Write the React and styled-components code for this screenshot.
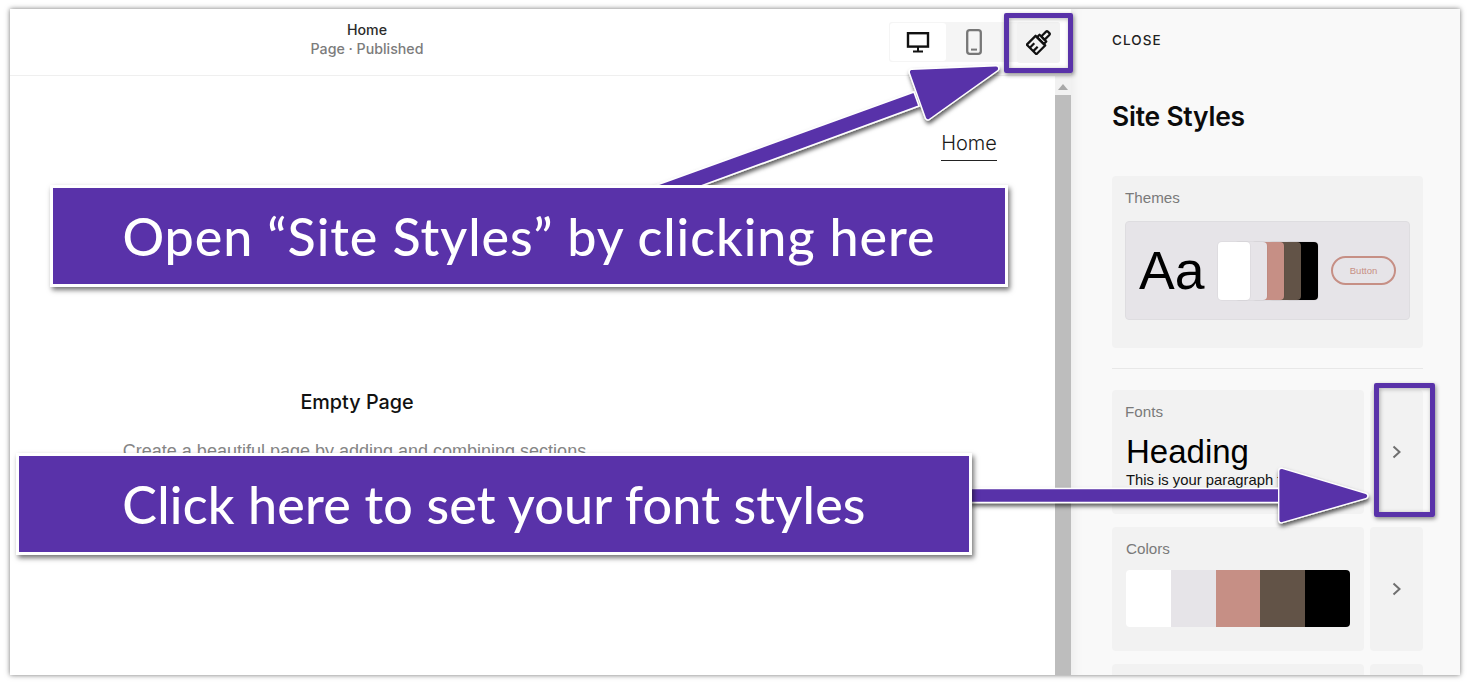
import React from 'react';
import styled, { createGlobalStyle } from 'styled-components';

const GlobalStyle = createGlobalStyle`
  html, body {
    margin: 0;
    padding: 0;
    background: #fff;
    font-family: "Inter", "Liberation Sans", sans-serif;
  }
`

const PURPLE = '#5932a9';

// page and screenshot frame
const Page = styled.div`
  position: relative;
  width: 1470px;
  height: 688px;
  padding: 9px 10px 13px;
  box-sizing: border-box;
  overflow: hidden;
  background: #fff;
`
const Screen = styled.div`
  display: flex;
  height: 666px;
  background: #fff;
  overflow: hidden;
  box-shadow: 0 0 5px rgba(0, 0, 0, 0.55);
`

// left side: editor
const Editor = styled.div`
  display: flex;
  flex-direction: column;
  width: 1061px;
  flex-shrink: 0;
`
const Header = styled.header`
  display: flex;
  align-items: center;
  height: 67px;
  flex-shrink: 0;
  padding-right: 11px;
  box-sizing: border-box;
  border-bottom: 1px solid #efefef;
`
const PageTitle = styled.div`
  width: 714px;
  padding-bottom: 7px;
  text-align: center;
  font-size: 14.2px;
  line-height: 19px;
  font-weight: 500;
  color: #2b2b2b;
`
const PageStatus = styled.div`
  color: #7c7c7c;
`
const DeviceGroup = styled.div`
  display: flex;
  align-items: center;
  margin-left: auto;
  height: 40px;
  padding-left: 1px;
  background: #f5f5f5;
  border-radius: 3px;
`
const DeviceButton = styled.div`
  display: flex;
  align-items: center;
  justify-content: center;
  width: ${p => p.$width}px;
  height: ${p => p.$height}px;
  margin-left: ${p => p.$gap || 0}px;
  background: ${p => p.$bg || 'transparent'};
  border-radius: 3px;
`
const EditorBody = styled.div`
  flex: 1;
  display: flex;
  min-height: 0;
`
const Canvas = styled.div`
  flex: 1;
  display: flex;
  flex-direction: column;
  padding: 55px 58px 0 0;
`
const NavLink = styled.div`
  align-self: flex-end;
  width: 56px;
  padding-bottom: 5px;
  border-bottom: 1px solid #222;
  font-weight: 300;
  font-size: 20px;
  line-height: 24px;
  color: #1a1a1a;
  text-align: center;
`
const EmptyBlock = styled.div`
  width: 694px;
  margin-top: 229px;
  text-align: center;
`
const EmptyTitle = styled.div`
  font-size: 19.8px;
  line-height: 24px;
  font-weight: 500;
  color: #111;
`
const EmptyText = styled.div`
  margin-top: 26px;
  font-family: "Liberation Sans", sans-serif;
  font-size: 18px;
  line-height: 22px;
  color: #858585;
`
const Scrollbar = styled.div`
  display: flex;
  flex-direction: column;
  align-items: center;
  width: 16px;
  flex-shrink: 0;
  background: #f1f1f1;
`
const ScrollUp = styled.div`
  width: 0;
  height: 0;
  margin: 8px 0 5px;
  border-left: 5px solid transparent;
  border-right: 5px solid transparent;
  border-bottom: 6px solid #a8a8a8;
`
const ScrollThumb = styled.div`
  flex: 1;
  width: 100%;
  background: #bdbdbd;
`

// right side: site styles panel
const Panel = styled.aside`
  flex: 1;
  padding: 24px 37px 0 41px;
  background: #f9f9f9;
  box-shadow: inset 14px 0 14px -14px rgba(0, 0, 0, 0.08);
  overflow: hidden;
`
const CloseLink = styled.div`
  font-size: 13.5px;
  line-height: 14px;
  font-weight: 500;
  letter-spacing: 1.1px;
  color: #222;
`
const PanelTitle = styled.h1`
  margin: 53px 0 0;
  font-size: 26.4px;
  line-height: 32px;
  font-weight: 600;
  letter-spacing: -0.2px;
  color: #0c0c0c;
`
const Card = styled.div`
  flex: 1;
  height: ${p => p.$height}px;
  padding: ${p => p.$pad || '14px 13px 0'};
  box-sizing: border-box;
  background: #f2f2f2;
  border-radius: 4px;
  overflow: hidden;
`
const ThemeWrap = styled.div`
  display: flex;
  margin-top: 44px;
`
const CardLabel = styled.div`
  font-family: "Liberation Sans", sans-serif;
  font-size: 15.2px;
  line-height: 16px;
  color: #7a7a7a;
`
const ThemePreview = styled.div`
  display: flex;
  align-items: center;
  height: 99px;
  margin-top: 15px;
  padding-left: 13px;
  box-sizing: border-box;
  background: #e6e4e8;
  border: 1px solid #dedde0;
  border-radius: 4px;
`
const ThemeAa = styled.div`
  width: 79px;
  font-family: "Liberation Sans", sans-serif;
  font-size: 53.5px;
  line-height: 60px;
  color: #000;
`
const StackedSwatches = styled.div`
  display: flex;
  width: 100px;
  height: 58px;
`
const StackedSwatch = styled.div`
  position: relative;
  z-index: ${p => p.$z};
  width: 32px;
  margin-left: ${p => p.$first ? 0 : -15}px;
  background: ${p => p.$color};
  border-radius: 4px;
  box-shadow: 0 0 0 1px rgba(0, 0, 0, 0.03);
`
const ThemeButton = styled.div`
  display: flex;
  align-items: center;
  justify-content: center;
  width: 65px;
  height: 29px;
  margin-left: 13px;
  box-sizing: border-box;
  border: 2px solid #c68f85;
  border-radius: 15px;
  font-family: "Liberation Sans", sans-serif;
  font-size: 9.5px;
  color: #c68f85;
`
const Divider = styled.div`
  height: 1px;
  margin: 20px 0 21px;
  background: #e8e8e8;
`
const Row = styled.div`
  display: flex;
  gap: 6px;
  margin-bottom: 13px;
`
const ChevronCard = styled.div`
  display: flex;
  align-items: center;
  justify-content: center;
  width: 53px;
  height: ${p => p.$height}px;
  flex-shrink: 0;
  background: #f2f2f2;
  border-radius: 4px;
  color: #6f6f6f;
`
const FontHeading = styled.div`
  margin-top: 14px;
  margin-left: 1px;
  font-family: "Liberation Sans", sans-serif;
  font-size: 33px;
  line-height: 36px;
  color: #000;
`
const FontParagraph = styled.div`
  margin-top: 2px;
  margin-left: 1px;
  font-family: "Liberation Sans", sans-serif;
  font-size: 14.8px;
  line-height: 16px;
  white-space: nowrap;
  color: #111;
`
const ColorStrip = styled.div`
  display: flex;
  height: 57px;
  margin-top: 13px;
  border-radius: 4px;
  overflow: hidden;
`
const ColorCell = styled.div`
  flex: 1;
  background: ${p => p.$color};
`

// tutorial annotations on top of the screenshot
const ArrowLayer = styled.svg`
  position: absolute;
  left: 0;
  top: 0;
  pointer-events: none;
`
const Banner = styled.div`
  position: absolute;
  left: ${p => p.$left}px;
  top: ${p => p.$top}px;
  width: ${p => p.$width}px;
  height: 102px;
  display: flex;
  align-items: center;
  justify-content: center;
  box-sizing: border-box;
  background: ${PURPLE};
  border: 3px solid #fff;
  box-shadow: 2px 3px 5px rgba(0, 0, 0, 0.55);
  font-family: "Lato", sans-serif;
  font-size: 52px;
  font-weight: 500;
  color: #fff;
  letter-spacing: ${p => p.$spacing}px;
  white-space: nowrap;
`
const Highlight = styled.div`
  position: absolute;
  left: ${p => p.$left}px;
  top: ${p => p.$top}px;
  width: ${p => p.$width}px;
  height: ${p => p.$height}px;
  box-sizing: border-box;
  border: 5px solid ${PURPLE};
  border-radius: 2px;
  box-shadow: 1px 2px 4px rgba(0, 0, 0, 0.45), inset 1px 1px 4px rgba(0, 0, 0, 0.3);
`

const DesktopIcon = () => (
  <svg width="24" height="24" viewBox="0 0 24 24" fill="none" stroke="#111" strokeWidth="2.4">
    <rect x="2" y="3.2" width="20" height="13.4" />
    <path d="M12 17v4M7 21.6h10" strokeWidth="2" />
  </svg>
)

const PhoneIcon = () => (
  <svg width="18" height="26" viewBox="0 0 18 26" fill="none" stroke="#777">
    <rect x="2.2" y="1.2" width="13.6" height="23.6" rx="2.6" strokeWidth="2.3" />
    <path d="M6 20.6h6" strokeWidth="2" />
  </svg>
)

const BrushIcon = () => (
  <svg width="25" height="25" viewBox="0 0 28 28" fill="none" stroke="#111" strokeWidth="2.5" strokeLinejoin="round">
    <g transform="rotate(45 14 14)">
      <rect x="11.4" y="-2" width="5.2" height="9" rx="1.4" />
      <path d="M8.6 7h10.8v4H8.6z" />
      <path d="M6.4 11h15.2v14H6.4z" />
      <path d="M11.3 25v-7M16.7 25v-7" />
    </g>
  </svg>
)

const Chevron = () => (
  <svg width="12" height="16" viewBox="0 0 12 16" fill="none" stroke="currentColor" strokeWidth="2">
    <path d="M2.5 2.5 8.5 8l-6 5.5" />
  </svg>
)

// head drawn twice so the white outline and purple fill both get round corners
const ArrowHead = ({ d }) => (
  <>
    <path d={d} fill="#fff" stroke="#fff" strokeWidth="7" strokeLinejoin="round" />
    <path d={d} fill={PURPLE} stroke={PURPLE} strokeWidth="4.2" strokeLinejoin="round" />
  </>
)

const THEME_COLORS = ['#ffffff', '#e6e4e8', '#c68f85', '#625347', '#000000'];

const App = () => {
  return (
    <Page>
      <GlobalStyle />
      <Screen>
        <Editor>
          <Header>
            <PageTitle>
              Home
              <PageStatus>Page · Published</PageStatus>
            </PageTitle>
            <DeviceGroup>
              <DeviceButton $width={56} $height={38} $bg="#fff"><DesktopIcon /></DeviceButton>
              <DeviceButton $width={55} $height={38}><PhoneIcon /></DeviceButton>
              <DeviceButton $width={43} $height={41} $gap={16} $bg="#f2f2f2"><BrushIcon /></DeviceButton>
            </DeviceGroup>
          </Header>
          <EditorBody>
            <Canvas>
              <NavLink>Home</NavLink>
              <EmptyBlock>
                <EmptyTitle>Empty Page</EmptyTitle>
                <EmptyText>Create a beautiful page by adding and combining sections.</EmptyText>
              </EmptyBlock>
            </Canvas>
            <Scrollbar>
              <ScrollUp />
              <ScrollThumb />
            </Scrollbar>
          </EditorBody>
        </Editor>
        <Panel>
          <CloseLink>CLOSE</CloseLink>
          <PanelTitle>Site Styles</PanelTitle>
          <ThemeWrap>
            <Card $height={172}>
              <CardLabel>Themes</CardLabel>
              <ThemePreview>
                <ThemeAa>Aa</ThemeAa>
                <StackedSwatches>
                  {THEME_COLORS.map((c, i) => (
                    <StackedSwatch key={c} $color={c} $z={5 - i} $first={i === 0} />
                  ))}
                </StackedSwatches>
                <ThemeButton>Button</ThemeButton>
              </ThemePreview>
            </Card>
          </ThemeWrap>
          <Divider />
          <Row>
            <Card $height={124}>
              <CardLabel>Fonts</CardLabel>
              <FontHeading>Heading</FontHeading>
              <FontParagraph>This is your paragraph font.</FontParagraph>
            </Card>
            <ChevronCard $height={124}><Chevron /></ChevronCard>
          </Row>
          <Row>
            <Card $height={124} $pad="14px 14px 0">
              <CardLabel>Colors</CardLabel>
              <ColorStrip>
                {THEME_COLORS.map(c => <ColorCell key={c} $color={c} />)}
              </ColorStrip>
            </Card>
            <ChevronCard $height={124}><Chevron /></ChevronCard>
          </Row>
          <Row>
            <Card $height={124} />
            <ChevronCard $height={124} />
          </Row>
        </Panel>
      </Screen>

      <ArrowLayer width="1470" height="688" viewBox="0 0 1470 688">
        <defs>
          <filter id="arrowShadow" x="-10%" y="-30%" width="120%" height="170%">
            <feDropShadow dx="1" dy="3" stdDeviation="2" floodColor="#000" floodOpacity="0.65" />
          </filter>
        </defs>
        <g filter="url(#arrowShadow)">
          <path d="M643 190 L914 92 L919 106 L690 190 Z" fill={PURPLE} stroke="#fff" strokeWidth="1.6" />
          <ArrowHead d="M912 72 L996 68.5 L928 117 Z" />
          <path d="M970 488.5 H1284 V502.5 H970 Z" fill={PURPLE} stroke="#fff" strokeWidth="1.6" />
          <ArrowHead d="M1281.5 471 L1365 496 L1281.5 520 Z" />
        </g>
      </ArrowLayer>

      <Banner $left={50} $top={185} $width={958} $spacing={0.95}>Open “Site Styles” by clicking here</Banner>
      <Banner $left={16} $top={453} $width={956} $spacing={0.2}>Click here to set your font styles</Banner>
      <Highlight $left={1004} $top={13} $width={69} $height={60} />
      <Highlight $left={1374} $top={383} $width={61} $height={134} />
    </Page>
  )
}
export default App;
